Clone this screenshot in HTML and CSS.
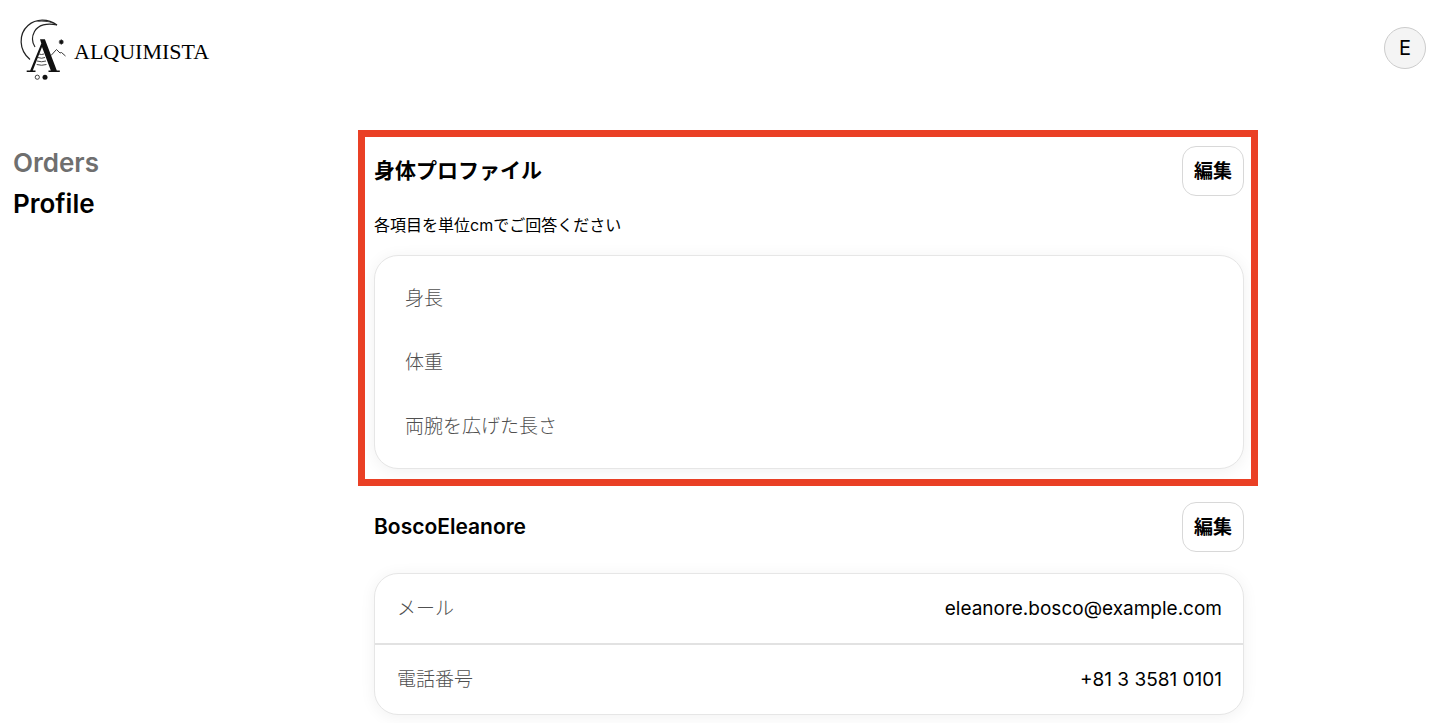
FILE: index.html
```html
<!DOCTYPE html>
<html lang="ja">
<head>
    <meta charset="UTF-8">
    <meta name="viewport" content="width=device-width, initial-scale=1.0">
    <title>Profile - Alquimista</title>
    <link rel="stylesheet" href="styles.css">
</head>
<body>
    <header class="site-header">
        <a href="#" class="logo">
            <svg class="logo-mark" viewBox="20 16 48 64" aria-hidden="true">
                <!-- Moon -->
                <path d="M57 25C48 18.500 36 18.500 28 25.500C18.500 34 18.500 50 30 59.500" fill="none" stroke="#222" stroke-width="1.200"/>
                <path d="M57 25C50 20.500 42 19.500 35 22C42 20.800 50 21.500 57 25Z" fill="#222"/>
                <path d="M57 25C47 22.500 38 25 34.500 31.500C31.500 37 32 42.500 35 47" fill="none" stroke="#222" stroke-width="1.200"/>
                <!-- Tower -->
                <path d="M40 39.300H44.900L56.800 70.500H59.800V72H48.500V70.500H50.800L42 47L32.800 70.500H35.500V72H26.700V70.500H30.200L41.300 43.500Z" fill="#111"/>
                <path d="M39 54Q41.500 55 44 54M38 57.500Q41.500 59 45 57.500M37 61Q41.500 62.500 46 61M36.700 64.500Q41.500 66 46.500 64.500" fill="none" stroke="#333" stroke-width="0.900"/>
                <!-- Hills and star -->
                <path d="M51 55.500L56.500 49.500L60 53L61.500 52.500L65.500 56" fill="none" stroke="#222" stroke-width="0.900"/>
                <path d="M61.300 39.500V44.500M58.800 42H63.800M59.600 40.300L63 43.700M63 40.300L59.600 43.700" stroke="#111" stroke-width="1.200"/>
                <circle cx="37.300" cy="77.200" r="2.100" fill="none" stroke="#111" stroke-width="0.800"/>
                <circle cx="45" cy="77.200" r="2.500" fill="#111"/>
            </svg>
            <span class="logo-text">ALQUIMISTA</span>
        </a>
        <button type="button" class="avatar">E</button>
    </header>

    <div class="layout">
        <nav class="sidebar">
            <a href="#" class="nav-link">Orders</a>
            <a href="#" class="nav-link active">Profile</a>
        </nav>

        <main class="content">
            <!-- Body profile -->
            <section class="section highlighted">
                <div class="section-head">
                    <h2>身体プロファイル</h2>
                    <button type="button" class="edit-btn">編集</button>
                </div>
                <p class="note">各項目を単位cmでご回答ください</p>
                <ul class="card measure-list">
                    <li>身長</li>
                    <li>体重</li>
                    <li>両腕を広げた長さ</li>
                </ul>
            </section>

            <!-- Contact details -->
            <section class="section">
                <div class="section-head">
                    <h2>BoscoEleanore</h2>
                    <button type="button" class="edit-btn">編集</button>
                </div>
                <dl class="card contact-list">
                    <div class="contact-row">
                        <dt>メール</dt>
                        <dd>eleanore.bosco@example.com</dd>
                    </div>
                    <div class="contact-row">
                        <dt>電話番号</dt>
                        <dd>+81 3 3581 0101</dd>
                    </div>
                </dl>
            </section>
        </main>
    </div>
</body>
</html>
```
FILE: styles.css
```css
* {
    box-sizing: border-box;
}

body {
    margin: 0;
    background-color: #fff;
    color: #000;
    font-family: Inter, "Noto Sans CJK JP", sans-serif;
    font-size: 19px;
    line-height: 28px;
}

h2,
p,
ul,
dl,
dd {
    margin: 0;
    padding: 0;
}

a {
    color: inherit;
    text-decoration: none;
}

button {
    font-family: inherit;
    color: inherit;
    cursor: pointer;
}

/* Header */
.site-header {
    display: flex;
    align-items: center;
    justify-content: space-between;
    padding: 16px 14px 17px 20px;
}

.logo {
    display: flex;
    align-items: center;
    gap: 6px;
}

.logo-mark {
    width: 48px;
    height: 64px;
}

.logo-text {
    padding-top: 8px;
    font-family: "Liberation Serif", serif;
    font-size: 22px;
}

.avatar {
    width: 42px;
    height: 42px;
    padding: 0;
    border: 1px solid #ccc;
    border-radius: 50%;
    background-color: #f4f4f4;
    font-size: 20px;
}

/* Page columns */
.layout {
    display: flex;
    padding: 33px 13px 8px;
}

.sidebar {
    display: flex;
    flex-direction: column;
    flex: 0 0 345px;
    gap: 13px;
    padding-top: 19px;
}

.nav-link {
    color: #6f6f6f;
    font-size: 26px;
    font-weight: 600;
}

.nav-link.active {
    color: #000;
}

.content {
    flex: 1;
    max-width: 900px;
}

/* Sections */
.section {
    padding: 16px 14px 0 16px;
}

.highlighted {
    padding: 9px 7px 10px 9px;
    border: 7px solid #ea4025;
}

.section-head {
    display: flex;
    align-items: center;
    justify-content: space-between;
}

.section-head h2 {
    font-size: 21px;
    font-weight: 600;
}

.edit-btn {
    height: 50px;
    padding: 0 11px 3px;
    border: 1px solid #d8d8d8;
    border-radius: 14px;
    background-color: #fff;
    font-size: 19px;
    font-weight: 600;
}

.note {
    margin: 17px 0 18px;
    font-size: 16px;
    line-height: 24px;
}

.card {
    border: 1px solid #e6e6e6;
    border-radius: 24px;
    background-color: #fff;
    box-shadow: 0 2px 16px rgba(0, 0, 0, 0.06);
}

.measure-list {
    display: flex;
    flex-direction: column;
    gap: 36px;
    padding: 29px 30px 27px;
    color: #505050;
    font-weight: 300;
    list-style: none;
}

.contact-list {
    margin-top: 21px;
}

.contact-row {
    display: flex;
    align-items: center;
    justify-content: space-between;
    padding: 21px 21px 20px 22px;
}

.contact-row + .contact-row {
    border-top: 2px solid #e2e2e2;
}

.contact-row dt {
    color: #505050;
    font-weight: 300;
}
```
